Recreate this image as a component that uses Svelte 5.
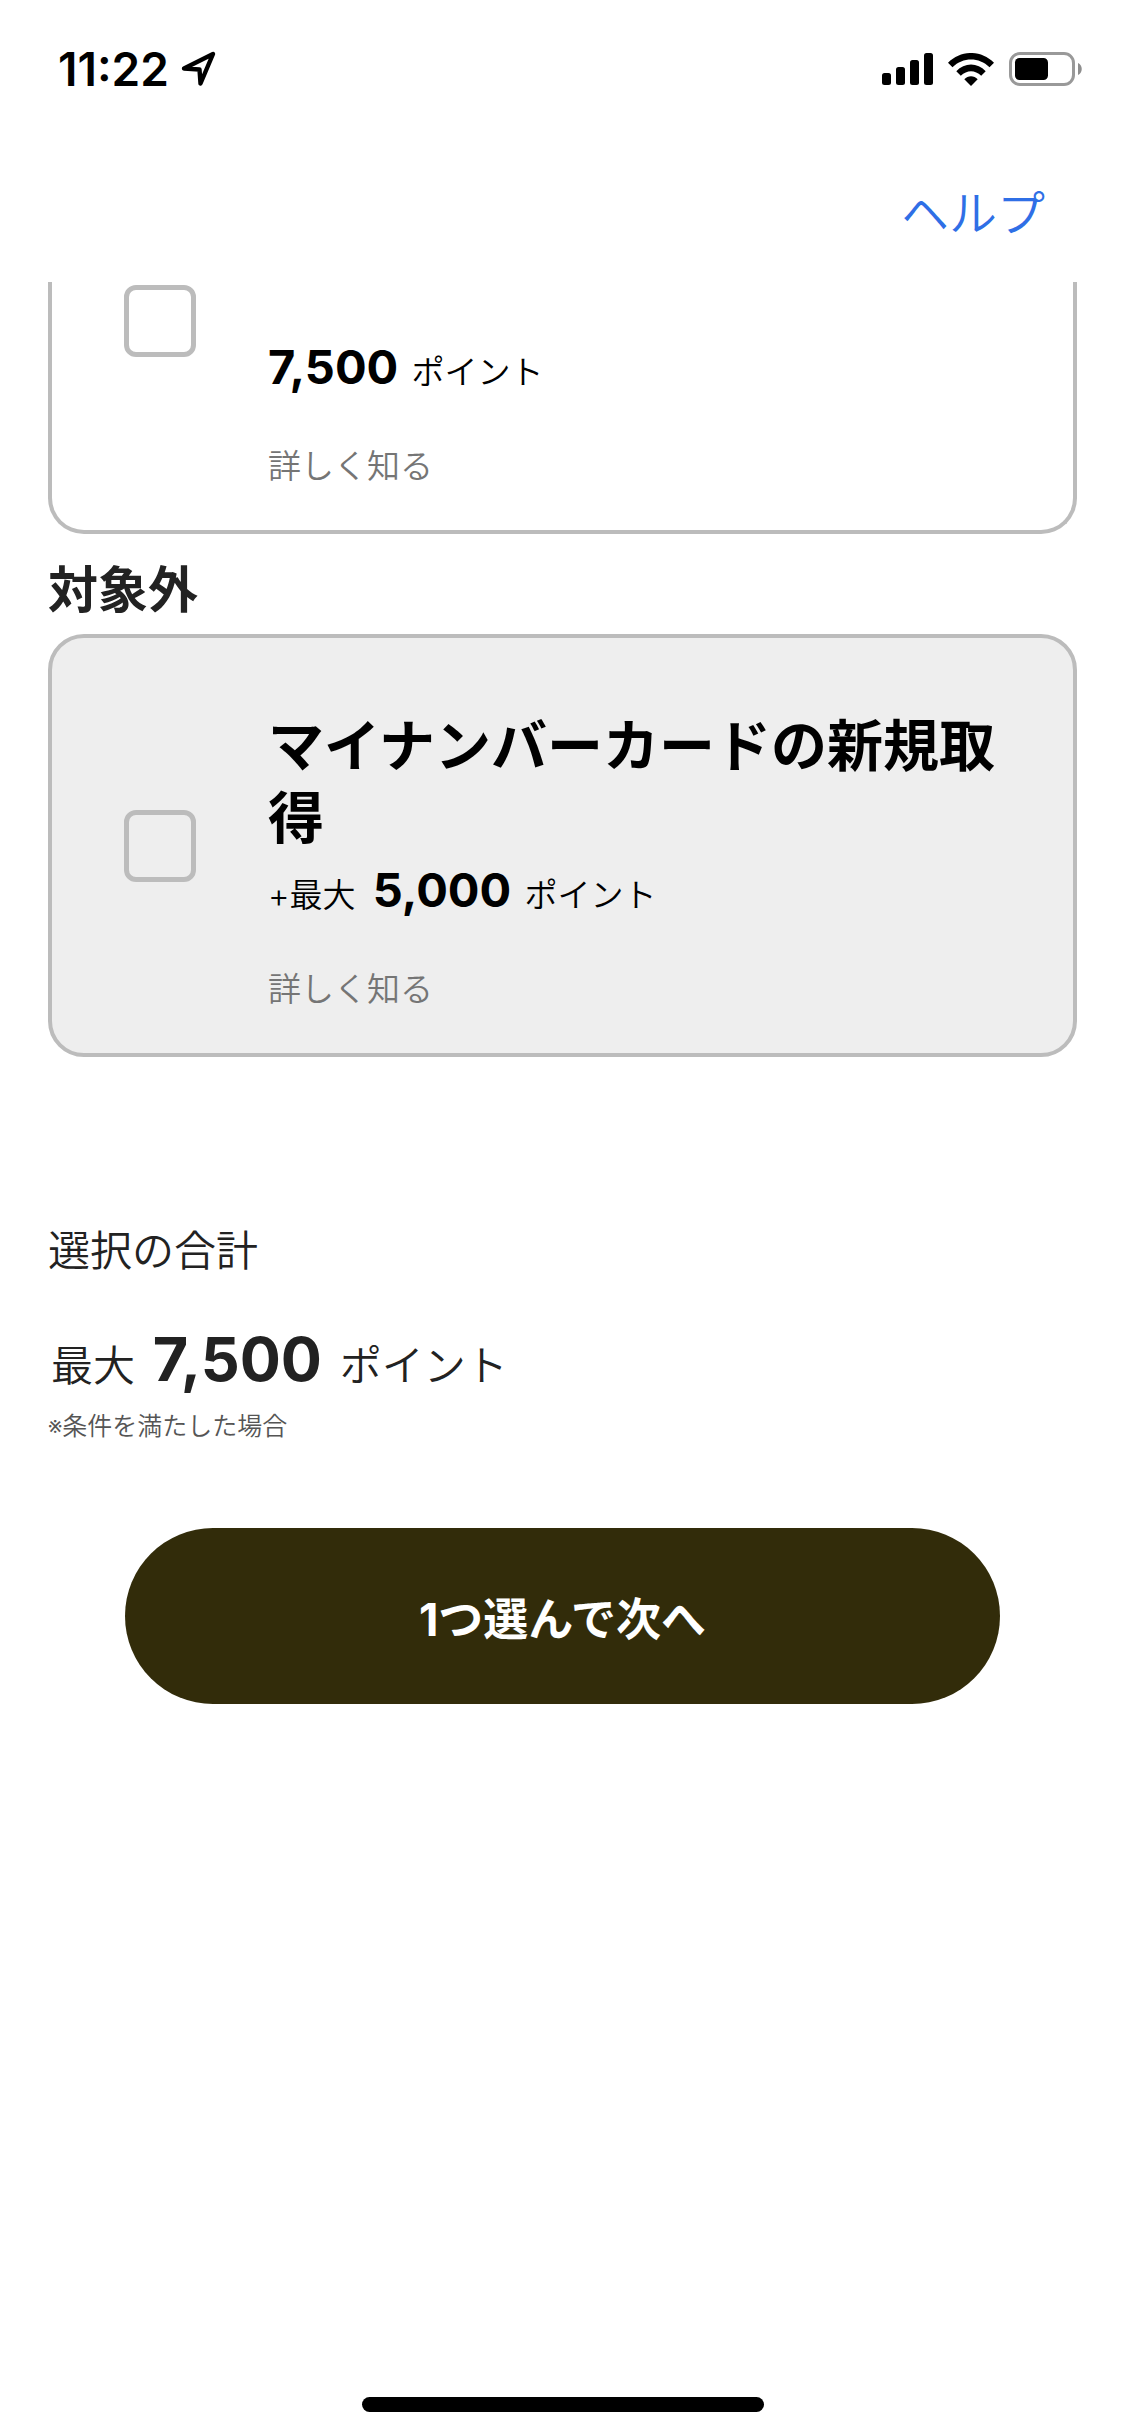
<script>
    let selected = false;
</script>

<div class="page">
    <div class="status">
        <div class="clock">
            <span>11:22</span>
            <svg width="36" height="36" viewBox="0 0 36 36" fill="none" stroke="#000" stroke-width="4.4" stroke-linejoin="round">
                <path d="M3 17.5 32 3 19.5 32.500 18.500 18.500Z" />
            </svg>
        </div>
        <div class="signals">
            <svg width="51" height="32" viewBox="0 0 51 32">
                <rect x="0" y="20" width="9" height="12" rx="2.5" />
                <rect x="14" y="14" width="9" height="18" rx="2.5" />
                <rect x="28" y="7" width="9" height="25" rx="2.5" />
                <rect x="42" y="0" width="9" height="32" rx="2.5" />
            </svg>
            <svg width="46" height="33" viewBox="0 0 46 33">
                <path d="M0 9.8C13-3.3 33-3.3 46 9.8L41.5 14.300C31 4 15 4 4.500 14.300Z" />
                <path d="M8.300 18.300C16.500 9.300 29.500 9.300 37.700 18.300L33.200 22.700C27 16.700 19 16.700 12.800 22.700Z" />
                <path d="M16.300 26.300C20 22.100 26 22.100 29.700 26.300L23 33Z" />
            </svg>
            <svg width="73" height="34" viewBox="0 0 73 34">
                <rect x="1.500" y="1.500" width="63" height="31" rx="9.500" fill="none" stroke="#999" stroke-width="3" />
                <rect x="6" y="6" width="33" height="22" rx="4.500" />
                <path d="M69 11C74 13 74 21 69 23Z" fill="#8e8e8e" />
            </svg>
        </div>
    </div>

    <header>
        <a class="help" href="#help">ヘルプ</a>
    </header>

    <main>
        <section class="card scrolled">
            <input type="checkbox" aria-label="7,500 ポイント" bind:checked={selected}>
            <div class="text">
                <p class="points"><strong>7,500</strong> ポイント</p>
                <a class="details" href="#details">詳しく知る</a>
            </div>
        </section>

        <h2>対象外</h2>

        <section class="card excluded">
            <input type="checkbox" id="new-card" disabled>
            <div class="text">
                <label for="new-card">マイナンバーカードの新規取得</label>
                <p class="points"><span>+最大</span> <strong>5,000</strong> ポイント</p>
                <a class="details" href="#details-new-card">詳しく知る</a>
            </div>
        </section>

        <section class="total">
            <p class="total-title">選択の合計</p>
            <p class="amount"><span>最大</span> <strong>7,500</strong> ポイント</p>
            <p class="note">※条件を満たした場合</p>
        </section>

        <button type="button">1つ選んで次へ</button>
    </main>

    <div class="home-bar"></div>
</div>

<style>
    :global(body){
        background-color: #fff;
    }

    .page{
        display: flex;
        flex-direction: column;
        min-height: 100vh;
        font-family: Inter, "Noto Sans CJK JP", sans-serif;
        font-weight: 350;
        color: #222;
    }

    p, h2{
        margin: 0;
    }

    .status{
        display: flex;
        justify-content: space-between;
        align-items: center;
        height: 138px;
        padding: 0 43px 0 58px;
    }

    .clock{
        display: flex;
        align-items: center;
        gap: 12px;
        font-size: 46px;
        font-weight: 600;
        color: #000;
    }

    .signals{
        display: flex;
        align-items: center;
        gap: 15px;
    }

    header{
        box-sizing: border-box;
        display: flex;
        justify-content: flex-end;
        align-items: center;
        height: 144px;
        padding: 8px 80px 0;
    }

    .help{
        font-size: 48px;
        line-height: 72px;
        color: #2f6fe6;
        text-decoration: none;
    }

    main{
        padding: 0 48px;
    }

    .card{
        display: flex;
        align-items: center;
        gap: 72px;
        padding: 40px 72px;
        border: 4px solid #bcbcbc;
        border-radius: 36px;
        color: #000;
    }

    /* upper part of this card is scrolled under the header */
    .scrolled{
        align-items: flex-start;
        padding-top: 3px;
        border-top: 0;
        border-top-left-radius: 0;
        border-top-right-radius: 0;
    }

    .excluded{
        background-color: #eee;
    }

    input{
        appearance: none;
        flex-shrink: 0;
        width: 72px;
        height: 72px;
        margin: 0;
        border: 5px solid #bcbcbc;
        border-radius: 12px;
    }

    input:checked{
        background-color: #322c0a;
    }

    .text{
        padding-top: 32px;
    }

    .scrolled .text{
        padding-top: 46px;
    }

    label{
        display: block;
        font-size: 56px;
        font-weight: 700;
        line-height: 72px;
    }

    .points{
        font-size: 33px;
        line-height: 72px;
    }

    .points span{
        margin-right: 4px;
    }

    .points strong{
        margin-right: 4px;
        font-size: 47px;
        font-weight: 700;
    }

    .points span + strong{
        margin-left: 4px;
    }

    .details{
        display: block;
        margin-top: 34px;
        font-size: 33px;
        line-height: 48px;
        color: #757575;
        text-decoration: none;
    }

    h2{
        padding: 20px 0 8px;
        font-size: 50px;
        font-weight: 700;
        line-height: 72px;
    }

    .total{
        margin-top: 164px;
    }

    .total-title{
        font-size: 42px;
        line-height: 60px;
    }

    .amount{
        margin-top: 36px;
        font-size: 42px;
        line-height: 84px;
    }

    .amount span{
        margin: 0 4px 0 3px;
    }

    .amount strong{
        margin: 0 6px 0 2px;
        font-size: 61px;
        font-weight: 700;
    }

    .note{
        font-size: 25px;
        line-height: 36px;
        color: #555;
    }

    button{
        display: block;
        width: 85%;
        height: 176px;
        margin: 84px auto 0;
        border: 0;
        border-radius: 88px;
        background-color: #322c0a;
        font-family: inherit;
        font-size: 45px;
        font-weight: 700;
        color: #fff;
    }

    .home-bar{
        width: 402px;
        height: 15px;
        margin: auto auto 24px;
        border-radius: 8px;
        background-color: #000;
    }
</style>
